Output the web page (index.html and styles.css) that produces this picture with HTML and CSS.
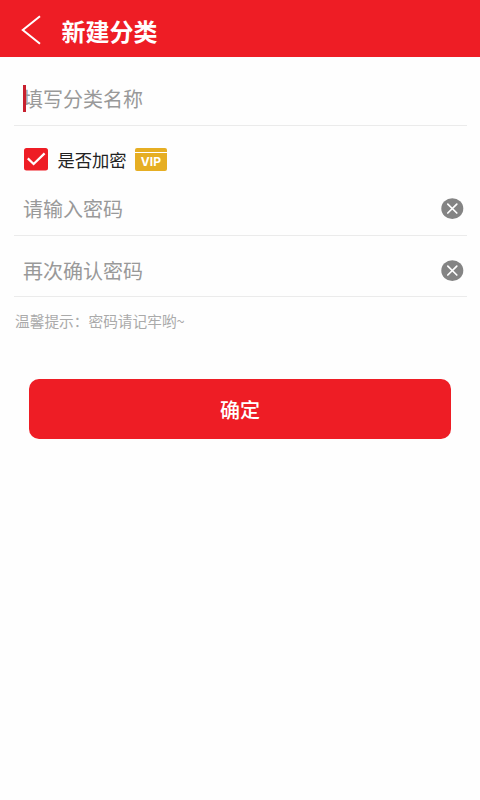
FILE: index.html
```
<!DOCTYPE html>
<html lang="zh-CN">
<head>
<meta charset="utf-8">
<title>新建分类</title>
<link rel="stylesheet" href="styles.css">
</head>
<body>
<header class="bar">
  <svg class="back" width="20" height="30" viewBox="0 0 20 30"><path d="M19 1.2 1.8 15 19 28.8"/></svg>
  <h1 class="title">新建分类</h1>
</header>
<main class="form">
  <div class="field field-name"><i class="caret"></i><span class="hint">填写分类名称</span></div>
  <div class="check-row">
    <svg class="box" width="24" height="23" viewBox="0 0 24 23"><rect width="24" height="22.4" rx="2.5" fill="#ee1d25"/><path d="M3.8 10.4 9.6 16 20.6 5.4" fill="none" stroke="#fff" stroke-width="2.2"/></svg>
    <span class="label">是否加密</span>
    <span class="vip"><b>VIP</b></span>
  </div>
  <div class="field field-pass"><span class="hint">请输入密码</span>
    <svg class="clear" width="23" height="22" viewBox="0 0 23 22"><ellipse cx="11.3" cy="10.6" rx="11" ry="10.4"/><path d="m6.8 6.2 9 8.8m0-8.8-9 8.8"/></svg>
  </div>
  <div class="field field-again"><span class="hint">再次确认密码</span>
    <svg class="clear" width="23" height="22" viewBox="0 0 23 22"><ellipse cx="11.3" cy="10.6" rx="11" ry="10.4"/><path d="m6.8 6.2 9 8.8m0-8.8-9 8.8"/></svg>
  </div>
  <p class="tip">温馨提示：密码请记牢哟~</p>
  <button class="submit" type="button">确定</button>
</main>
</body>
</html>
```
FILE: styles.css
```
* { box-sizing: border-box; }
body {
  margin: 0;
  min-height: 800px;
  background: #fefefe;
  font-family: "Noto Sans CJK SC", sans-serif;
}
.bar {
  display: flex;
  align-items: center;
  height: 57px;
  padding: 3px 0 0 21px;
  background: #ee1d25;
}
.back {
  fill: none;
  stroke: #fff;
  stroke-width: 2;
}
.title {
  margin: 1px 0 0 20.5px;
  font-size: 24px;
  line-height: 36px;
  font-weight: 700;
  color: #fff;
}
.form { padding: 0 13px 0 14px; }
.field {
  position: relative;
  display: flex;
  align-items: center;
  justify-content: space-between;
  padding: 0 3px 0 9px;
  border-bottom: 1px solid #ebebeb;
}
.field-name { height: 69px; padding-top: 16px; }
.field-pass { height: 61px; padding-top: 7px; }
.field-again { height: 61px; padding-top: 9px; }
.hint {
  font-size: 20px;
  line-height: 30px;
  color: #999;
}
.caret {
  position: absolute;
  left: 9px;
  top: 28px;
  width: 3px;
  height: 27px;
  background: #c8202f;
}
.check-row {
  display: flex;
  align-items: center;
  height: 49px;
  padding: 17px 0 0 10px;
}
.label {
  margin: 1px 8px 0 9.5px;
  font-size: 17.3px;
  line-height: 26px;
  color: #222;
}
.vip {
  width: 32.5px;
  height: 23px;
  border-radius: 2px;
  background: linear-gradient(#e6ae23 4px, #fff 4px, #fff 5px, #e6ae23 5px);
  color: #fff;
  text-align: center;
}
.vip b {
  display: block;
  padding-top: 6px;
  font: 700 12px/16px Inter, sans-serif;
}
.clear ellipse { fill: #848484; }
.clear path {
  stroke: #fff;
  stroke-width: 1.7;
  stroke-linecap: round;
}
.tip {
  margin: 13px 0 0 1px;
  font-size: 14.7px;
  line-height: 22px;
  color: #aaa;
}
.submit {
  display: block;
  width: 422px;
  height: 60px;
  margin: 47px 0 0 15px;
  padding: 2px 0 0;
  border: 0;
  border-radius: 10px;
  background: #ee1d25;
  font: 500 20px/58px "Noto Sans CJK SC", sans-serif;
  color: #fff;
}
```
